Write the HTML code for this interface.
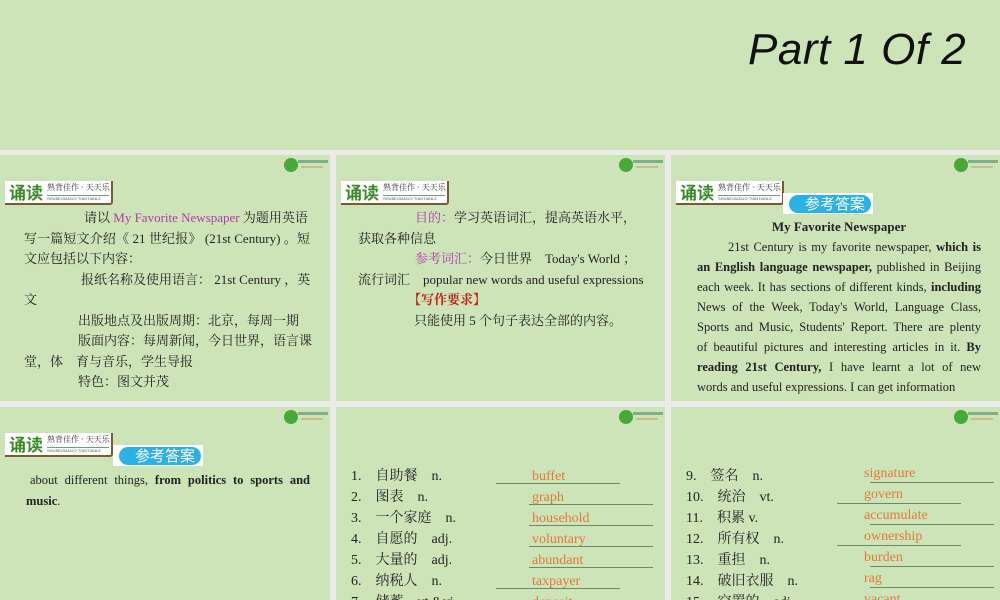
<!DOCTYPE html>
<html><head><meta charset="utf-8"><style>
*{margin:0;padding:0;box-sizing:border-box}
body{width:1000px;height:600px;background:#ebebe7;position:relative;overflow:hidden;font-family:"Liberation Serif","Noto Serif CJK SC",serif;color:#222}
.p{position:absolute;background:#cde4b9;overflow:hidden}
.a{position:absolute;white-space:nowrap}
.a div{white-space:nowrap}
.t{font-size:13px;line-height:20.5px}
.badge{position:absolute;left:5px;top:26px;width:108px;height:24px;background:#fff;border-right:2px solid #7a5a30;border-bottom:2px solid #7a5a30;border-radius:0 0 3px 0}
.badge .b1{position:absolute;left:4px;top:1px;font:bold 17px/20px "Noto Sans CJK SC",sans-serif;color:#3a8a2a}
.badge .b2{position:absolute;left:42px;top:2px;font:8px/10px "Noto Serif CJK SC",serif;color:#333}
.badge .b3{position:absolute;left:42px;top:14px;font:4px/5px "Liberation Sans",sans-serif;color:#555;border-top:1px solid #7a9a6a;width:62px}
.ans{position:absolute;width:90px;height:21px;background:#fff}
.ans i{position:absolute;left:6px;top:2px;width:82px;height:18px;border-radius:9px;background:#2bb2e4}
.ans span{position:absolute;left:22px;top:1px;font:15px/19px "Noto Sans CJK SC",sans-serif;color:#fff}
.logo{position:absolute;right:2px;top:2px;width:44px;height:16px}
.logo i{position:absolute;left:0;top:1px;width:14px;height:14px;border-radius:50%;background:#4aa83a}
.logo b{position:absolute;left:14px;top:3px;width:30px;height:3px;background:#4a8a6a;opacity:.6}
.logo u{position:absolute;left:17px;top:9px;width:22px;height:2px;background:#c9a060;opacity:.6}
.r{color:#e07a3c;font-family:"Liberation Serif",serif;font-size:14px}
.ul{position:absolute;border-bottom:1px solid #6c8a5c;height:1px}
.cn{font-family:"Liberation Serif","Noto Serif CJK SC",serif;font-size:14px}
.j{text-align:justify;text-align-last:justify}
</style></head><body>
<div class="p" style="left:0;top:0;width:1000px;height:150px">
<div class="a" style="left:748px;top:24px;font:italic 44px/52px 'Liberation Sans',sans-serif;color:#111;letter-spacing:0.5px">Part 1 Of 2</div>
</div>

<!-- panel 1 -->
<div class="p" style="left:0;top:155px;width:330px;height:246px">
<div class="logo"><i></i><b></b><u></u></div>
<div class="badge"><div class="b1">诵读</div><div class="b2">熟背佳作 · 天天乐</div><div class="b3">SHUBEIJIADUO·TIANTIANLE</div></div>
<div class="a t" style="left:24px;top:53px;width:286px">
<div style="padding-left:60px">请以 <span style="color:#b23aa8">My Favorite Newspaper</span> 为题用英语</div>
<div class="j">写一篇短文介绍《 21 世纪报》 (21st Century) 。短</div>
<div>文应包括以下内容：</div>
<div class="j" style="padding-left:57px">报纸名称及使用语言： 21st Century ，英</div>
<div>文</div>
<div style="padding-left:54px">出版地点及出版周期：北京，每周一期</div>
<div class="j" style="padding-left:54px">版面内容：每周新闻，今日世界，语言课</div>
<div>堂，体　育与音乐，学生导报</div>
<div style="padding-left:54px">特色：图文并茂</div>
</div>
</div>

<!-- panel 2 -->
<div class="p" style="left:336px;top:155px;width:329px;height:246px">
<div class="logo"><i></i><b></b><u></u></div>
<div class="badge"><div class="b1">诵读</div><div class="b2">熟背佳作 · 天天乐</div><div class="b3">SHUBEIJIADUO·TIANTIANLE</div></div>
<div class="a t" style="left:22px;top:53px">
<div style="padding-left:57px"><span style="color:#b23aa8">目的：</span>学习英语词汇，提高英语水平，</div>
<div>获取各种信息</div>
<div style="padding-left:57px"><span style="color:#b23aa8">参考词汇：</span>今日世界　Today's World ；</div>
<div>流行词汇　popular new words and useful expressions</div>
<div style="padding-left:50px;color:#c0201a;font-weight:bold">【写作要求】</div>
<div style="padding-left:56px">只能使用 5 个句子表达全部的内容。</div>
</div>
</div>

<!-- panel 3 -->
<div class="p" style="left:671px;top:155px;width:329px;height:246px">
<div class="logo"><i></i><b></b><u></u></div>
<div class="badge"><div class="b1">诵读</div><div class="b2">熟背佳作 · 天天乐</div><div class="b3">SHUBEIJIADUO·TIANTIANLE</div></div>
<div class="ans" style="left:112px;top:38px"><i></i><span>参考答案</span></div>
<div class="a" style="left:26px;top:62px;width:284px;font-size:12.5px;line-height:20px">
<div style="text-align:center;font-weight:bold;font-size:13px">My Favorite Newspaper</div>
<div class="j" style="padding-left:31px">21st Century is my favorite newspaper, <b>which is</b></div>
<div class="j"><b>an English language newspaper,</b> published in Beijing</div>
<div class="j">each week. It has sections of different kinds, <b>including</b></div>
<div class="j">News of the Week, Today's World, Language Class,</div>
<div class="j">Sports and Music, Students' Report. There are plenty</div>
<div class="j">of beautiful pictures and interesting articles in it. <b>By</b></div>
<div class="j"><b>reading 21st Century,</b> I have learnt a lot of new</div>
<div>words and useful expressions. I can get information</div>
</div>
</div>

<!-- panel 4 -->
<div class="p" style="left:0;top:407px;width:330px;height:193px">
<div class="logo"><i></i><b></b><u></u></div>
<div class="badge"><div class="b1">诵读</div><div class="b2">熟背佳作 · 天天乐</div><div class="b3">SHUBEIJIADUO·TIANTIANLE</div></div>
<div class="ans" style="left:113px;top:38px"><i></i><span>参考答案</span></div>
<div class="a" style="left:26px;top:63px;width:284px;font-size:12.5px;line-height:20.5px">
<div class="j" style="padding-left:4px">about different things, <b>from politics to sports and</b></div>
<div><b>music</b>.</div>
</div>
</div>

<!-- panel 5 -->
<div class="p" style="left:336px;top:407px;width:329px;height:193px">
<div class="logo"><i></i><b></b><u></u></div>
<div class="a cn" style="left:15px;top:59px;line-height:21px">
<div>1.　自助餐　n.</div><div>2.　图表　n.</div><div>3.　一个家庭　n.</div><div>4.　自愿的　adj.</div><div>5.　大量的　adj.</div><div>6.　纳税人　n.</div><div>7.　储蓄　vt.&amp;vi.</div>
</div>
<div class="ul" style="left:160px;top:76px;width:124px"></div>
<div class="ul" style="left:193px;top:97px;width:124px"></div>
<div class="ul" style="left:193px;top:118px;width:124px"></div>
<div class="ul" style="left:193px;top:139px;width:124px"></div>
<div class="ul" style="left:193px;top:160px;width:124px"></div>
<div class="ul" style="left:160px;top:181px;width:124px"></div>
<div class="a r" style="left:196px;top:59px;line-height:21px">
<div>buffet</div><div>graph</div><div>household</div><div>voluntary</div><div>abundant</div><div>taxpayer</div><div>deposit</div>
</div>
</div>

<!-- panel 6 -->
<div class="p" style="left:671px;top:407px;width:329px;height:193px">
<div class="logo"><i></i><b></b><u></u></div>
<div class="a cn" style="left:15px;top:59px;line-height:21px">
<div>9.　签名　n.</div><div>10.　统治　vt.</div><div>11.　积累 v.</div><div>12.　所有权　n.</div><div>13.　重担　n.</div><div>14.　破旧衣服　n.</div><div>15.　空置的　adj.</div>
</div>
<div class="ul" style="left:199px;top:75px;width:124px"></div>
<div class="ul" style="left:166px;top:96px;width:124px"></div>
<div class="ul" style="left:199px;top:117px;width:124px"></div>
<div class="ul" style="left:166px;top:138px;width:124px"></div>
<div class="ul" style="left:199px;top:159px;width:124px"></div>
<div class="ul" style="left:199px;top:180px;width:124px"></div>
<div class="a r" style="left:193px;top:56px;line-height:21px">
<div>signature</div><div>govern</div><div>accumulate</div><div>ownership</div><div>burden</div><div>rag</div><div>vacant</div>
</div>
</div>
</body></html>
